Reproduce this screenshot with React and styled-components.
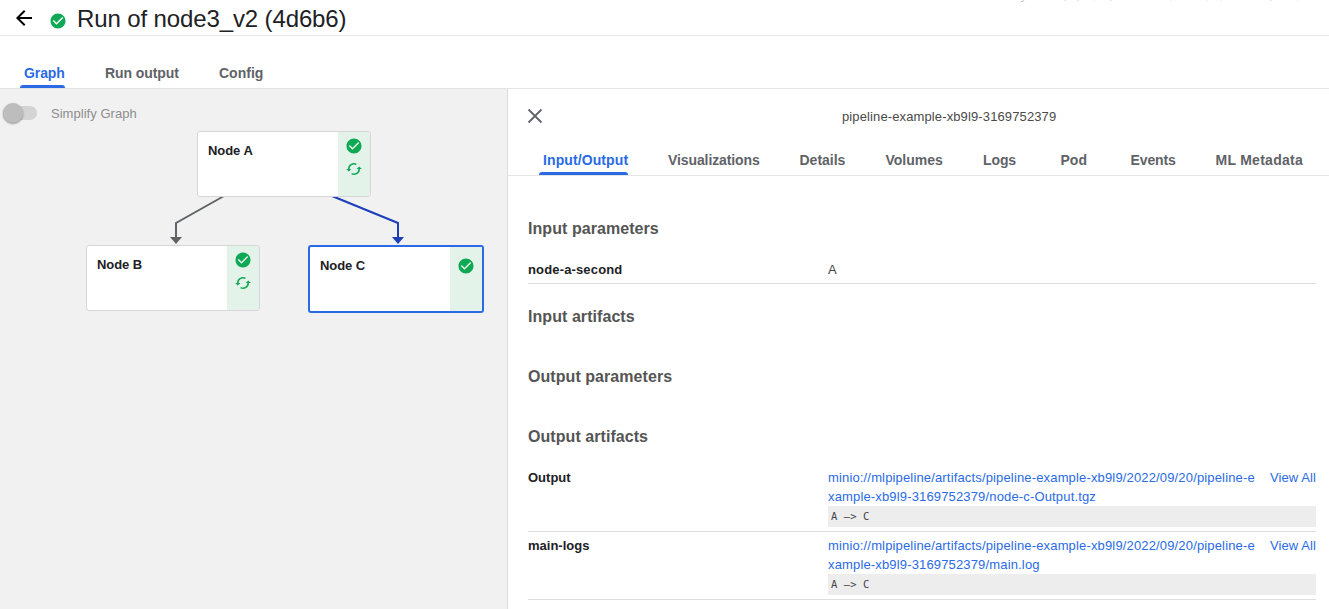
import React from 'react';
import styled, { createGlobalStyle } from 'styled-components';

const Global = createGlobalStyle`
  * { box-sizing: border-box; }
  body { margin: 0; background: #fff; font: 13px/19px "Liberation Sans", Arial, sans-serif; letter-spacing: 0.12px; color: #202124; overflow: hidden; }
`;
const Page = styled.div`display: flex; flex-direction: column; height: 609px; width: 1329px; overflow: hidden;`;
const Header = styled.header`position: relative; display: flex; align-items: center; height: 36px; flex: none; border-bottom: 1px solid #e8e8e8; padding-left: 12px;`;
const ClippedMarks = styled.svg`position: absolute; top: 0; left: 1000px; width: 329px; height: 3px;`;
const BackIcon = styled.svg`width: 24px; height: 24px; fill: #000; margin-top: 1px;`;
const StatusIcon = styled.svg`width: 18px; height: 18px; margin: 6px 10px 0 13px; fill: #0fa854;`;
const Title = styled.h1`margin: 2px 0 0; font-size: 24px; line-height: 34px; font-weight: 400; letter-spacing: -0.12px;`;
const TabBar = styled.nav`display: flex; flex: none; align-items: flex-end; border-bottom: 1px solid #e4e4e4; height: ${p => p.$h}px; padding-left: ${p => p.$left}px;`;
const Tab = styled.div`
  width: ${p => p.$w}px; height: 30px; padding-left: 4px; font-weight: 700; font-size: 14px; line-height: 30px; letter-spacing: ${p => p.$ls || 0}px; white-space: nowrap;
  color: ${p => p.$active ? '#2a6be5' : '#5f6368'};
  display: flex; flex-direction: column; justify-content: space-between;
  &::after { content: ''; display: ${p => p.$active ? 'block' : 'none'}; flex: none; height: 3px; margin-left: -4px; width: ${p => p.$bar}px; border-radius: 3px 3px 0 0; background: #2a6be5; }
`;
const TabText = styled.span`height: 27px;`;
const Main = styled.main`display: flex; flex: 1; min-height: 0;`;
const Canvas = styled.section`position: relative; width: 507px; flex: none; background: #f1f1f1;`;
const ToggleRow = styled.label`display: flex; align-items: center; height: 24px; padding: 0 0 0 3px; margin-top: 12px; color: #8d8d8d; gap: 14px; letter-spacing: 0.03px;`;
const Track = styled.span`display: flex; align-items: center; width: 34px; height: 14px; border-radius: 7px; background: #d4d4d4;`;
const Knob = styled.span`width: 20px; height: 20px; border-radius: 50%; background: #bdbdbd; box-shadow: 0 1px 2px rgba(0,0,0,.4); flex: none;`;
const Edges = styled.svg`position: absolute; left: 0; top: 0; width: 507px; height: 260px; fill: none;`;
const Node = styled.div`
  position: absolute; left: ${p => p.$x}px; top: ${p => p.$y}px; display: flex; width: ${p => p.$sel ? 176 : 174}px; height: ${p => p.$sel ? 68 : 66}px;
  background: #fff; border: ${p => p.$sel ? '2px solid #2a6be5' : '1px solid #d6d6d6'}; border-radius: 3px; overflow: hidden;
`;
const NodeName = styled.div`flex: 1; padding: 9px 0 0 10px; font-weight: 700; letter-spacing: -0.05px;`;
const NodeStatus = styled.div`display: flex; flex-direction: column; align-items: center; gap: 5px; width: 32px; background: #e4f3e9; padding-top: ${p => p.$top}px;`;
const NodeIcon = styled.svg`width: 18px; height: 18px; fill: #0fa854; display: block;`;
const Panel = styled.section`display: flex; flex-direction: column; flex: 1; min-width: 0; border-left: 1px solid #dcdcdc; background: #fff;`;
const PanelHead = styled.div`display: flex; align-items: center; height: 54px; flex: none; padding: 0 0 0 18px; color: #4a4a4a;`;
const CloseIcon = styled.svg`width: 18px; height: 18px; stroke: #5f6368; stroke-width: 1.8; flex: none;`;
const PodName = styled.div`flex: 1; padding-left: 298px; padding-top: 1px;`;
const Body = styled.div`padding: 0 13px 0 20px;`;
const Heading = styled.h2`margin: 0; height: 20px; font-size: 16px; line-height: 20px; letter-spacing: 0.06px; color: #555; margin-top: ${p => p.$mt}px;`;
const Rows = styled.div`margin-top: ${p => p.$mt}px;`;
const Row = styled.div`display: flex; border-bottom: 1px solid #dedede; padding: 4px 0;`;
const Key = styled.div`width: 300px; flex: none; font-weight: 700; letter-spacing: ${p => p.$ls || 0}px; line-height: 19px;`;
const Value = styled.div`flex: 1; min-width: 0; color: #444;`;
const Links = styled.div`display: flex; justify-content: space-between; color: #2a6be5; line-height: 19px; letter-spacing: 0.155px;`;
const Preview = styled.pre`margin: 0; height: 21px; padding: 0 3px; font: 10.5px/21px "DejaVu Sans Mono", monospace; letter-spacing: .08px; background: #ededed; color: #444;`;
const ViewAll = styled.span`white-space: nowrap; letter-spacing: 0.1px;`;

const CHECK = 'M12 2C6.48 2 2 6.48 2 12s4.48 10 10 10 10-4.48 10-10S17.52 2 12 2zm-2 15l-5-5 1.41-1.41L10 14.17l7.59-7.59L19 8l-9 9z';
const Check = ({ as: As = NodeIcon }) => <As viewBox="0 0 24 24"><path d={CHECK} /></As>;
const Cached = () => (
  <NodeIcon viewBox="0 0 18 18">
    <path d="M3.8 9.5A5.2 5.2 0 0 1 11.4 4.4M14.2 8.5A5.2 5.2 0 0 1 6.6 13.6" fill="none" stroke="#0fa854" strokeWidth="1.5" />
    <path d="M1.2 9h5.2L3.8 11.4zM11.6 9h5.2L14.2 6.6z" />
  </NodeIcon>
);
const NodeCard = ({ x, y, name, cached, selected }) => (
  <Node $x={x} $y={y} $sel={selected}>
    <NodeName>{name}</NodeName>
    <NodeStatus $top={selected ? 10 : 5}><Check />{cached && <Cached />}</NodeStatus>
  </Node>
);
const PANEL_TABS = [['Input/Output', 125, 0.1], ['Visualizations', 131.5, -0.1], ['Details', 86, 0], ['Volumes', 97.5, 0], ['Logs', 77.5, -0.1], ['Pod', 70, 0], ['Events', 85, -0.1], ['ML Metadata', 100, 0.27]];
const ARTIFACTS = [['Output', 'node-c-Output.tgz'], ['main-logs', 'main.log']];

export default function App() {
  return (
    <Page>
      <Global />
      <Header>
        <BackIcon viewBox="0 0 24 24"><path d="M20 11H7.83l5.59-5.59L12 4l-8 8 8 8 1.41-1.41L7.83 13H20v-2z" /></BackIcon>
        <Check as={StatusIcon} />
        <Title>Run of node3_v2 (4d6b6)</Title>
        <ClippedMarks viewBox="0 0 329 3">
          <path d="M24 0l-1 1.5h-2" fill="none" stroke="#c4c4c4" />
          <path d="M64 .3h2M77 .3h2M94 .3h1M110 .3h2M170 .3h1M207 .3h1M221 .3h1M270 .3h2M297 .3h1" stroke="#cfd4fa" strokeWidth=".7" />
        </ClippedMarks>
      </Header>
      <TabBar $h={53} $left={20}>
        <Tab $active $bar={45} $w={81} $ls={-0.1}><TabText>Graph</TabText></Tab>
        <Tab $w={114} $ls={-0.08}><TabText>Run output</TabText></Tab>
        <Tab $w={60}><TabText>Config</TabText></Tab>
      </TabBar>
      <Main>
        <Canvas>
          <ToggleRow><Track><Knob /></Track>Simplify Graph</ToggleRow>
          <Edges viewBox="0 0 507 260">
            <path d="M224 107L176 134V150" stroke="#5f6368" strokeWidth="2" />
            <path d="M170 148h12l-6 7z" fill="#5f6368" />
            <path d="M332 107L398 134V150" stroke="#1a3fb8" strokeWidth="2" />
            <path d="M392 148h12l-6 7z" fill="#1a3fb8" />
          </Edges>
          <NodeCard x={197} y={42} name="Node A" cached />
          <NodeCard x={86} y={156} name="Node B" cached />
          <NodeCard x={308} y={156} name="Node C" selected />
        </Canvas>
        <Panel>
          <PanelHead>
            <CloseIcon viewBox="0 0 18 18"><path d="M2.5 2.5l13 13M15.5 2.5l-13 13" /></CloseIcon>
            <PodName>pipeline-example-xb9l9-3169752379</PodName>
          </PanelHead>
          <TabBar $h={33} $left={31}>
            {PANEL_TABS.map(([t, w, ls], i) => <Tab key={t} $active={i === 0} $bar={89} $w={w} $ls={ls}><TabText>{t}</TabText></Tab>)}
          </TabBar>
          <Body>
            <Heading $mt={43}>Input parameters</Heading>
            <Rows $mt={17}>
              <Row><Key $ls={0.15}>node-a-second</Key><Value>A</Value></Row>
            </Rows>
            <Heading $mt={23}>Input artifacts</Heading>
            <Heading $mt={40}>Output parameters</Heading>
            <Heading $mt={40}>Output artifacts</Heading>
            <Rows $mt={17}>
              {ARTIFACTS.map(([k, file]) => (
                <Row key={k}>
                  <Key>{k}</Key>
                  <Value>
                    <Links>
                      <span>minio://mlpipeline/artifacts/pipeline-example-xb9l9/2022/09/20/pipeline-e<br />xample-xb9l9-3169752379/{file}</span>
                      <ViewAll>View All</ViewAll>
                    </Links>
                    <Preview>{'A –> C'}</Preview>
                  </Value>
                </Row>
              ))}
            </Rows>
          </Body>
        </Panel>
      </Main>
    </Page>
  );
}
